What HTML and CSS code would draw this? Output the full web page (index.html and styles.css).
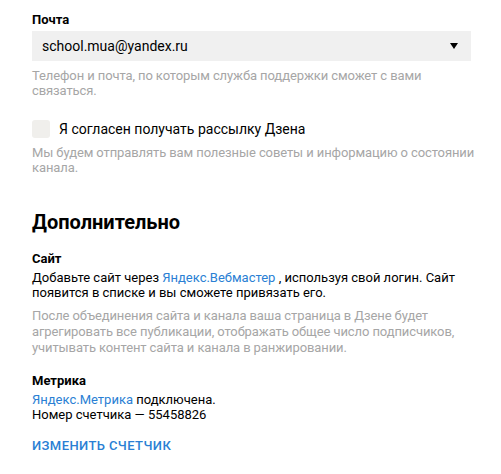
FILE: index.html
```html
<!DOCTYPE html>
<html>
<head>
  <meta charset="UTF-8" />
  <link rel="stylesheet" href="styles.css">
</head>
<body>
  <div class="page">
    <div class="field">
      <div class="field-label">Почта</div>
      <div class="select">
        <span class="select-value">school.mua@yandex.ru</span>
        <span class="select-arrow"></span>
      </div>
      <p class="hint">Телефон и почта, по которым служба поддержки сможет с вами<br>связаться.</p>
    </div>

    <div class="field">
      <label class="checkbox">
        <span class="checkbox-box"></span>
        Я согласен получать рассылку Дзена
      </label>
      <p class="hint">Мы будем отправлять вам полезные советы и информацию о состоянии<br>канала.</p>
    </div>

    <h2 class="section-title">Дополнительно</h2>

    <div class="block">
      <div class="block-title">Сайт</div>
      <p class="text">Добавьте сайт через <a class="link" href="#">Яндекс.Вебмастер</a> , используя свой логин. Сайт<br>появится в списке и вы сможете привязать его.</p>
      <p class="hint hint-dense">После объединения сайта и канала ваша страница в Дзене будет<br>агрегировать все публикации, отображать общее число подписчиков,<br>учитывать контент сайта и канала в ранжировании.</p>
    </div>

    <div class="block">
      <div class="block-title">Метрика</div>
      <p class="text"><a class="link" href="#">Яндекс.Метрика</a> подключена.<br>Номер счетчика — 55458826</p>
      <button class="btn-link">Изменить счетчик</button>
    </div>
  </div>
</body>
</html>
```

FILE: styles.css
```css
body {
  margin: 0;
  background: #fff;
  color: #000;
  font-family: Roboto, 'Liberation Sans', sans-serif;
  font-size: 13px;
}

.page {
  width: 439px;
  padding: 12px 0 0 32px;
}

.field {
  margin-bottom: 22px;
}

.field-label {
  font-weight: bold;
  line-height: 16px;
  margin-bottom: 3px;
}

.select {
  display: flex;
  align-items: center;
  justify-content: space-between;
  height: 30px;
  padding: 0 13px 0 10px;
  background: #f0f0f0;
  font-size: 14px;
}

.select-arrow {
  width: 0;
  height: 0;
  border-left: 4.5px solid transparent;
  border-right: 4.5px solid transparent;
  border-top: 6px solid #000;
}

.hint {
  margin: 7px 0 0;
  color: #a6a6a6;
  line-height: 15px;
  white-space: nowrap;
  letter-spacing: -0.1px;
}

.checkbox {
  display: flex;
  align-items: center;
  gap: 9px;
  font-size: 14px;
  line-height: 18px;
}

.checkbox-box {
  width: 18px;
  height: 18px;
  border-radius: 3px;
  background: #f0efec;
}

.section-title {
  margin: 35px 0 0;
  font-size: 20px;
  line-height: 24px;
}

.block {
  margin-top: 17px;
}

.block + .block {
  margin-top: 17px;
}

.block-title {
  font-weight: bold;
  line-height: 15px;
}

.text {
  margin: 4px 0 0;
  line-height: 15px;
  white-space: nowrap;
}

.text + .hint {
  margin-top: 8px;
}

.hint-dense {
  line-height: 16px;
}

.link {
  color: #2a7fd4;
  text-decoration: none;
}

.btn-link {
  margin-top: 16px;
  padding: 0;
  border: none;
  background: none;
  color: #2a7fd4;
  font-family: inherit;
  font-size: 13px;
  font-weight: 500;
  letter-spacing: 0.4px;
  text-transform: uppercase;
  cursor: pointer;
}
```
